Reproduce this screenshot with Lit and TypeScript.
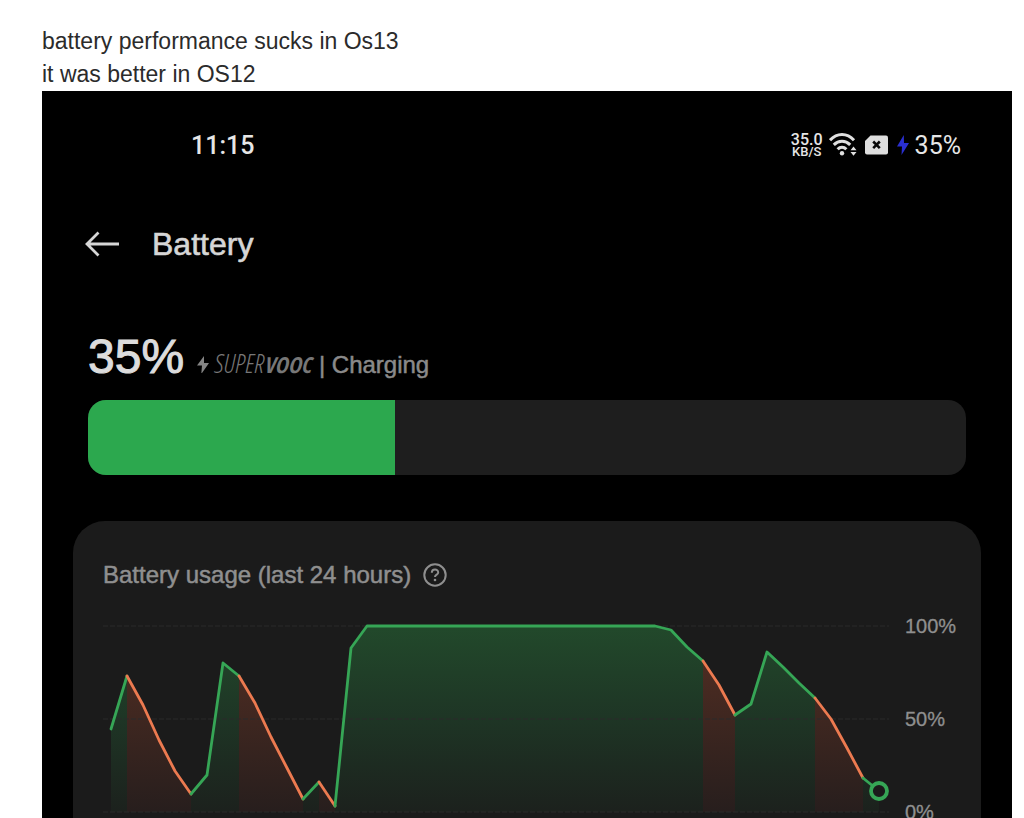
import { LitElement, html, css, svg } from "lit";
import { customElement, property } from "lit/decorators.js";

type Tone = "green" | "orange";

const STEP = 16;
const LEFT = 8;
const BASE = 196;

// One reading per half hour, as heights on the 206 unit tall plot.
const READINGS = [
  113, 60, 89, 124, 155, 178, 159, 47, 60, 87, 121, 152, 183, 166, 190, 32,
  ...Array(19).fill(10),
  14, 31, 45, 69, 99, 88, 36, 51, 67, 82, 103, 132, 162, 175,
];

// Index ranges between readings, with the colour of each stretch.
const STRETCHES: [number, number, Tone][] = [
  [0, 1, "green"],
  [1, 5, "orange"],
  [5, 8, "green"],
  [8, 12, "orange"],
  [12, 13, "green"],
  [13, 14, "orange"],
  [14, 37, "green"],
  [37, 39, "orange"],
  [39, 44, "green"],
  [44, 47, "orange"],
  [47, 48, "green"],
];

const px = (i: number) => LEFT + i * STEP;

@customElement("usage-chart")
export class UsageChart extends LitElement {
  static styles = css`
    :host {
      display: flex;
      gap: 16px;
    }
    .plot {
      flex: 1;
      min-width: 0;
      height: auto;
      display: block;
    }
    .scale {
      width: 60px;
      display: flex;
      flex-direction: column;
      justify-content: space-between;
      font-size: 20px;
      line-height: 20px;
      color: #8f8f8f;
      -webkit-text-stroke: 0.3px #8f8f8f;
    }
    .grid {
      stroke: #2a2a2a;
      stroke-width: 1;
      stroke-dasharray: 5 2;
    }
    .line {
      fill: none;
      stroke-width: 2.8;
      stroke-linejoin: round;
      stroke-linecap: round;
    }
    .line.green {
      stroke: #36a656;
    }
    .line.orange {
      stroke: #ec7a50;
    }
    .now {
      fill: #1b1b1b;
      stroke: #36a656;
      stroke-width: 3.8;
    }
  `;

  render() {
    const pts = (a: number, b: number) =>
      READINGS.slice(a, b + 1)
        .map((y, k) => `${px(a + k)},${y}`)
        .join(" ");
    const last = READINGS.length - 1;
    return html`
      <svg class="plot" viewBox="0 0 786 206" role="img" aria-label="Battery level over the last 24 hours">
        <defs>
          <linearGradient id="green" gradientUnits="userSpaceOnUse" x1="0" y1="10" x2="0" y2="196">
            <stop offset="0" stop-color="#22492b" />
            <stop offset="0.5" stop-color="#1e3525" />
            <stop offset="1" stop-color="#1c211d" />
          </linearGradient>
          <linearGradient id="orange" gradientUnits="userSpaceOnUse" x1="0" y1="45" x2="0" y2="196">
            <stop offset="0" stop-color="#4d2c22" />
            <stop offset="1" stop-color="#271e1d" />
          </linearGradient>
        </defs>
        ${STRETCHES.map(
          ([a, b, tone]) => svg`<polygon
            fill="url(#${tone})"
            points="${px(a)},${BASE} ${pts(a, b)} ${px(b)},${BASE}" />`
        )}
        ${[10, 103, 196].map((y) => svg`<line class="grid" x1="0" x2="786" y1=${y} y2=${y} />`)}
        ${STRETCHES.map(([a, b, tone]) => svg`<polyline class="line ${tone}" points=${pts(a, b)} />`)}
        <circle class="now" cx=${px(last)} cy=${READINGS[last]} r="8" />
      </svg>
      <div class="scale"><span>100%</span><span>50%</span><span>0%</span></div>
    `;
  }
}

@customElement("status-bar")
export class StatusBar extends LitElement {
  static styles = css`
    :host {
      display: flex;
      align-items: center;
      justify-content: space-between;
      height: 36px;
      padding: 0 51px 0 149px;
      font-family: Roboto, "Noto Sans", sans-serif;
      color: #e6e6e6;
    }
    .clock {
      font-size: 25px;
      font-weight: 500;
    }
    .icons {
      display: flex;
      align-items: center;
    }
    .speed {
      display: flex;
      flex-direction: column;
      align-items: center;
      font-size: 16px;
      line-height: 13px;
      font-weight: 500;
      margin-right: 6px;
    }
    .unit {
      font-size: 13px;
      line-height: 11px;
    }
    .wifi {
      margin-right: 8px;
    }
    .sim {
      margin-right: 9px;
    }
    .bolt {
      margin-right: 6px;
    }
    .level {
      font-size: 25px;
    }
  `;

  render() {
    return html`
      <time class="clock">11:15</time>
      <div class="icons">
        <div class="speed"><span>35.0</span><span class="unit">KB/S</span></div>
        <svg class="wifi" width="28" height="24" viewBox="0 0 28 24" fill="none" stroke="#e0e0e0" stroke-width="3">
          <path d="M1 7.200C8-.4 18-.4 25 7.200" />
          <path d="M4.800 11.900c4.800-5 11.600-5 16.400 0" />
          <path d="M8.600 16.300c2.600-2.700 6.200-2.700 8.800 0" />
          <circle cx="13" cy="20.300" r="2.200" fill="#e0e0e0" stroke="none" />
          <path d="M21.500 17.200l3-3.700 3 3.700zM21.500 19l3 3.700 3-3.700z" fill="#e0e0e0" stroke="none" />
        </svg>
        <svg class="sim" width="23" height="20" viewBox="0 0 23 20">
          <path d="M5.500.5H21q2 0 2 2v15q0 2-2 2H2q-2 0-2-2V6z" fill="#dedede" />
          <path d="M8.200 6.500l6.600 6.600M14.800 6.500l-6.600 6.600" stroke="#080808" stroke-width="2.600" />
        </svg>
        <svg class="bolt" width="12" height="20" viewBox="0 0 12 20">
          <path d="M6.800 0L0 11.500h5L4.500 20 12 8H7z" fill="#2a2fd0" />
        </svg>
        <span class="level">35%</span>
      </div>
    `;
  }
}

@customElement("app-root")
export class AppRoot extends LitElement {
  @property({ type: Number }) level = 35;

  static styles = css`
    :host {
      display: block;
      box-sizing: border-box;
      height: 100vh;
      overflow: hidden;
      padding: 25px 12px 0 42px;
      background: #fff;
      font-family: "Liberation Sans", Arial, sans-serif;
    }
    .post {
      margin: 0;
      font-size: 23px;
      line-height: 33px;
      color: #2b2b2b;
    }
    .phone {
      background: #000;
      padding-top: 36px;
      min-height: 100vh;
    }
    .header {
      display: flex;
      align-items: center;
      gap: 32px;
      height: 40px;
      margin-top: 61px;
      padding-left: 43px;
    }
    .icon-button {
      display: block;
      padding: 0;
      border: 0;
      background: none;
      line-height: 0;
      cursor: pointer;
    }
    .title {
      margin: 0;
      font-size: 32px;
      font-weight: 400;
      color: #d6d6d6;
      -webkit-text-stroke: 0.6px #d6d6d6;
    }
    .summary {
      display: flex;
      align-items: baseline;
      margin: 61px 46px 0;
      height: 75px;
      line-height: 64px;
      color: #8a8a8a;
    }
    .percent {
      font-size: 48px;
      color: #dcdcdc;
      -webkit-text-stroke: 1px #dcdcdc;
      margin-right: 13px;
    }
    .flash {
      margin-right: 5px;
    }
    .brand {
      font-family: "Open Sans Condensed Light", "Open Sans Condensed", Roboto, sans-serif;
      font-size: 26px;
      font-style: italic;
      font-weight: 300;
      color: #777;
    }
    .brand b {
      font-family: "Open Sans Condensed", Roboto, sans-serif;
      font-size: 22px;
      font-weight: 700;
    }
    .state {
      font-size: 24px;
      margin-left: 8px;
      -webkit-text-stroke: 0.5px #8a8a8a;
    }
    .bar {
      height: 75px;
      margin: 0 46px;
      border-radius: 18px;
      background: #1e1e1e;
      overflow: hidden;
    }
    .fill {
      height: 100%;
      background: #2ca84e;
    }
    .card {
      margin: 46px 31px 0;
      padding: 38px 16px 40px 30px;
      border-radius: 32px;
      background: #1b1b1b;
    }
    .card-head {
      display: flex;
      align-items: center;
      gap: 12px;
      height: 32px;
      margin-bottom: 25px;
    }
    .card-title {
      margin: 0;
      font-size: 24px;
      font-weight: 400;
      color: #8f8f8f;
      -webkit-text-stroke: 0.5px #8f8f8f;
    }
  `;

  render() {
    return html`
      <p class="post">battery performance sucks in Os13<br />it was better in OS12</p>
      <main class="phone">
        <status-bar></status-bar>
        <header class="header">
          <button class="icon-button" aria-label="Back">
            <svg width="35" height="26" viewBox="0 0 35 26" fill="none" stroke="#d6d6d6" stroke-width="2.8">
              <path d="M34 13H2.500M13.500 1.500L2 13l11.500 11.500" />
            </svg>
          </button>
          <h1 class="title">Battery</h1>
        </header>
        <section class="summary">
          <span class="percent">${this.level}%</span>
          <svg class="flash" width="12" height="17" viewBox="0 0 12 17">
            <path d="M7 0L0 9.500h5L4.300 18 12 7H7z" fill="#858585" />
          </svg>
          <span class="brand">SUPER<b>VOOC</b></span>
          <span class="state">| Charging</span>
        </section>
        <div class="bar" role="progressbar" aria-label="Battery level" aria-valuenow=${this.level}>
          <div class="fill" style="width:${this.level}%"></div>
        </div>
        <section class="card">
          <div class="card-head">
            <h2 class="card-title">Battery usage (last 24 hours)</h2>
            <button class="icon-button" aria-label="About battery usage">
              <svg width="24" height="24" viewBox="0 0 24 24" fill="none" stroke="#8f8f8f" stroke-width="2">
                <circle cx="12" cy="12" r="10.700" />
                <path d="M8.800 9.800c0-4.200 6.400-4.200 6.400-.4 0 2.300-3.200 2.200-3.200 4.700" />
                <circle cx="12" cy="17" r="1.300" fill="#8f8f8f" stroke="none" />
              </svg>
            </button>
          </div>
          <usage-chart></usage-chart>
        </section>
      </main>
    `;
  }
}
